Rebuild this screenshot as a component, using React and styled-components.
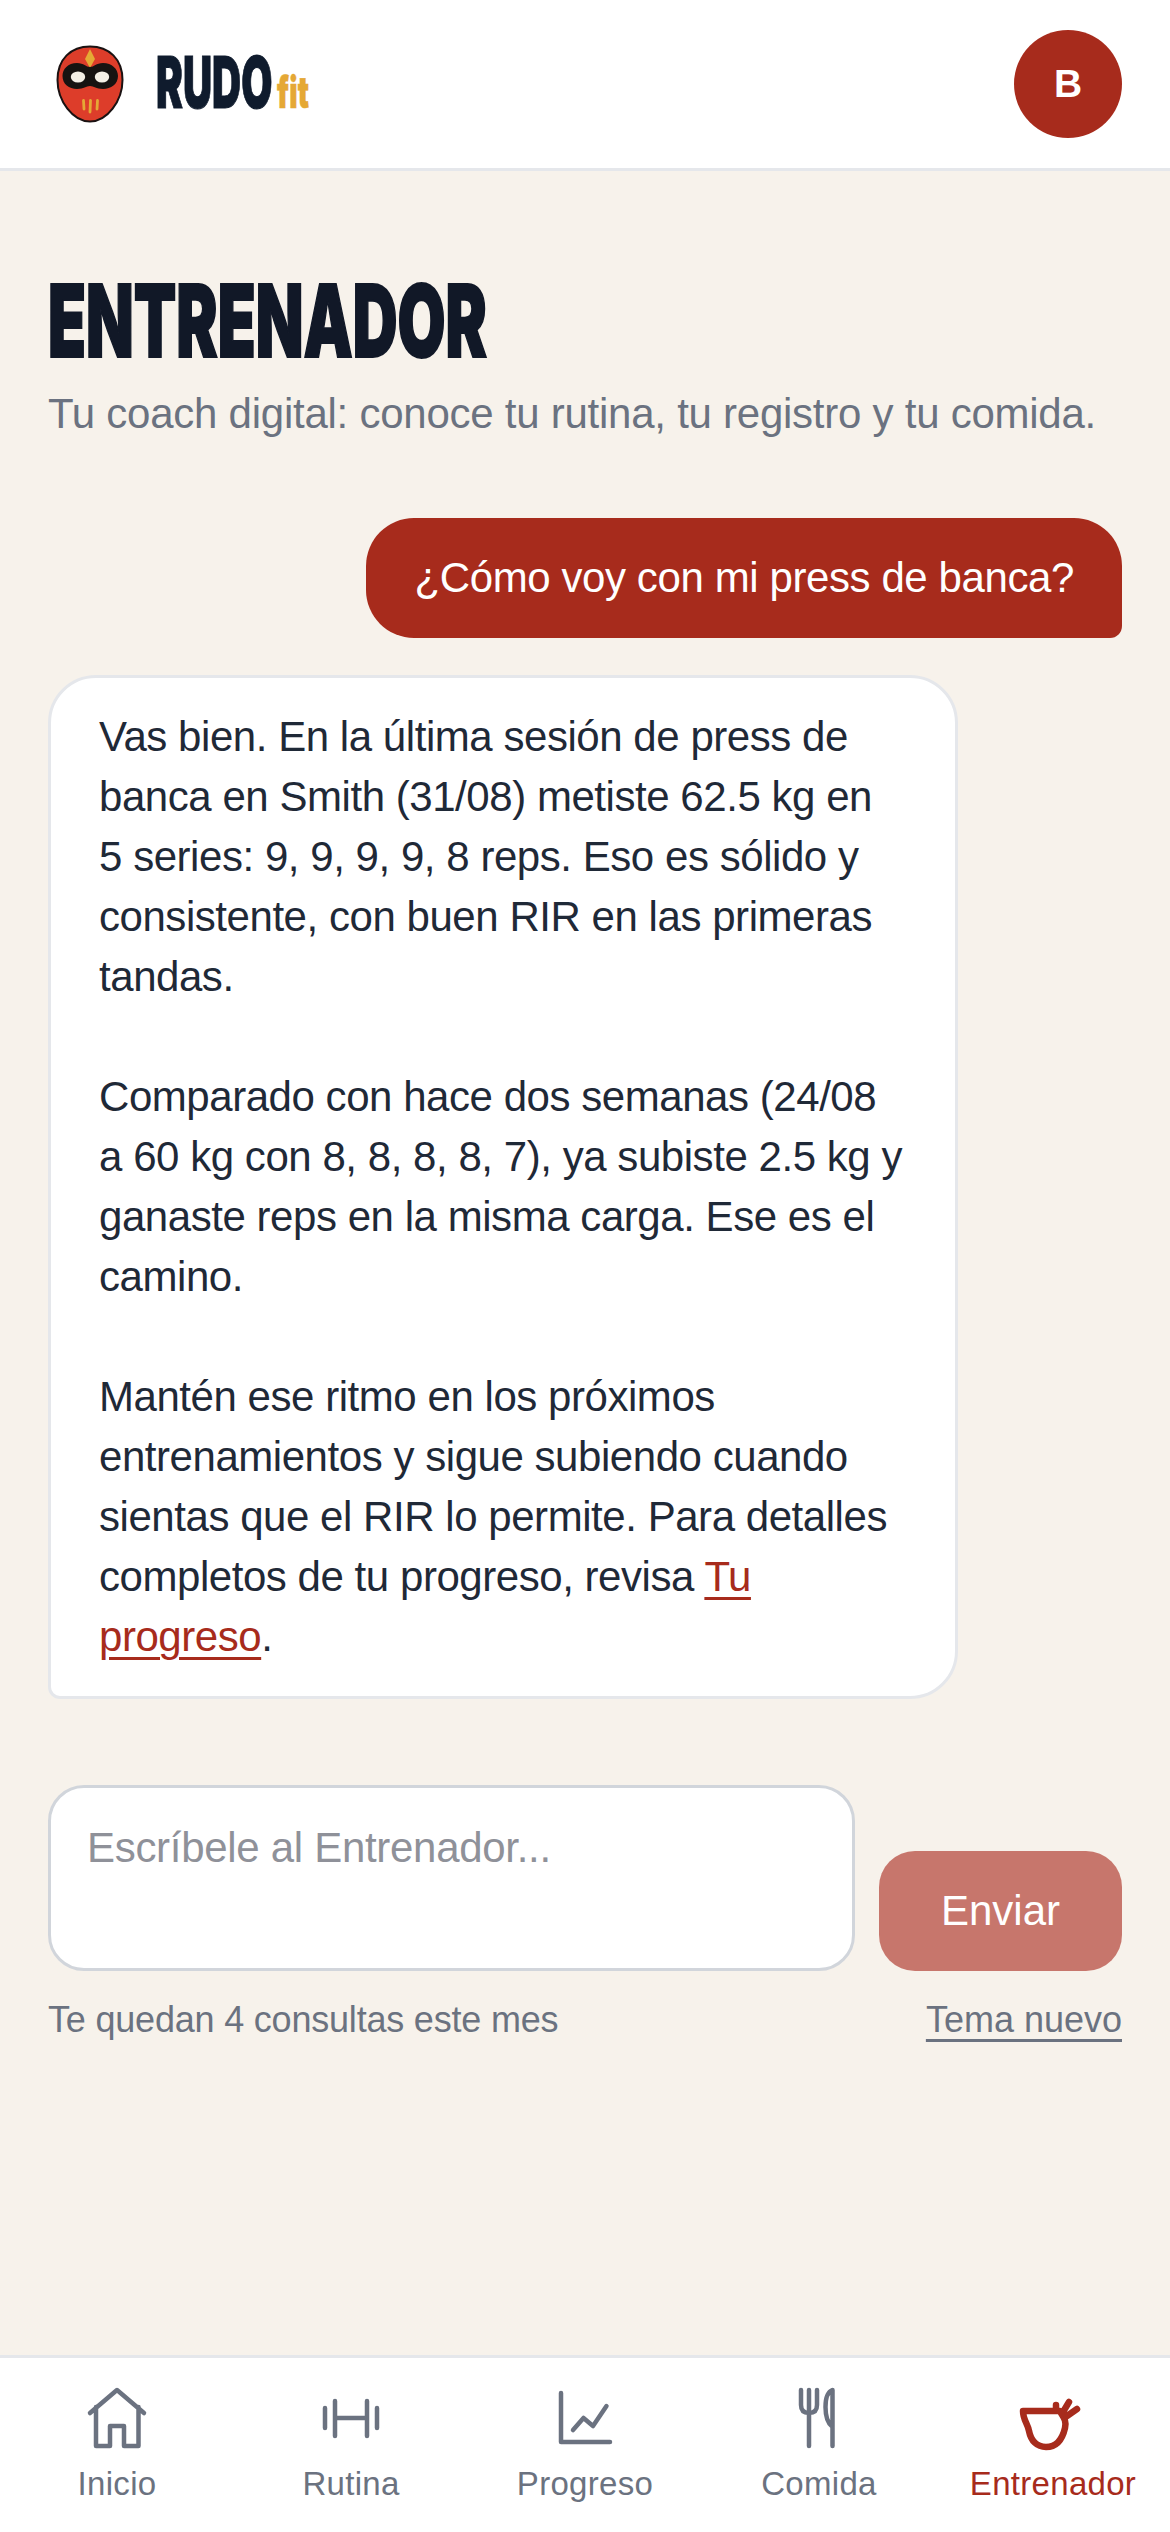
import React from "react";
import styled, { createGlobalStyle } from "styled-components";

const Global = createGlobalStyle`
  html, body { margin: 0; padding: 0; background: #f7f2eb; }
  body { font-family: "Liberation Sans", Arial, sans-serif; color: #111827; }
  * { box-sizing: border-box; }
`;
const Page = styled.div`
  height: 2532px; display: flex; flex-direction: column; overflow: hidden;
`;
const Header = styled.header`
  height: 171px; flex: none; background: #fff; border-bottom: 3px solid #e5e7eb;
  display: flex; align-items: center; justify-content: space-between; padding: 0 48px 0 56px;
`;
const Brand = styled.div`display: flex; align-items: center; gap: 32px;`;
const Wordmark = styled.div`
  display: flex; align-items: baseline; width: 160px; height: 76px;
`;
const Squeezed = styled.span`
  display: inline-block; font-family: Inter, sans-serif; font-weight: 900; line-height: 1;
  transform-origin: left bottom; transform: scaleX(${p => p.$sx});
  font-size: ${p => p.$size}px; color: ${p => p.$color};
  -webkit-text-stroke: ${p => p.$stroke}px ${p => p.$color};
  letter-spacing: ${p => p.$ls || 0}px; white-space: nowrap;
  flex: none; width: ${p => p.$w}px;
`;
const Avatar = styled.div`
  width: 108px; height: 108px; border-radius: 50%; background: #a72b1c; color: #fff;
  display: flex; align-items: center; justify-content: center; font-size: 39px; font-weight: 700;
`;
const Main = styled.main`flex: 1; padding: 102px 48px 0; display: flex; flex-direction: column;`;
const Title = styled.h1`
  margin: 0; height: 96px; display: flex; align-items: center;
`;
const Subtitle = styled.p`
  margin: 15px 0 0; font-size: 42px; line-height: 60px; color: #6b7280; letter-spacing: -0.25px; white-space: nowrap;
`;
const Thread = styled.div`margin-top: 74px; display: flex; flex-direction: column; gap: 37px;`;
const UserBubble = styled.div`
  align-self: flex-end; background: #a72b1c; color: #fff; font-size: 42px; line-height: 60px; letter-spacing: -0.4px;
  padding: 30px 48px; border-radius: 48px 48px 12px 48px; white-space: nowrap;
`;
const CoachBubble = styled.div`
  align-self: flex-start; width: 910px; background: #fff; border: 3px solid #e5e7eb; letter-spacing: -0.45px;
  padding: 29px 50px 29px 48px; border-radius: 48px 48px 48px 12px; font-size: 42px; line-height: 60px; color: #1f2937;
`;
const Para = styled.p`
  margin: 0 0 60px; &:last-child { margin-bottom: 0; }
`;
const InlineLink = styled.a`color: #a72b1c; text-decoration: underline; text-underline-offset: 6px; text-decoration-thickness: 3px;`;
const Composer = styled.form`margin-top: 86px; display: flex; align-items: flex-end; gap: 24px;`;
const Input = styled.textarea`
  flex: 1; height: 186px; border: 3px solid #d1d5db; border-radius: 36px; background: #fff; padding: 35px 36px;
  font: 42px/50px "Liberation Sans", Arial, sans-serif; letter-spacing: -0.3px; resize: none; outline: none;
  &::placeholder { color: #8f9199; opacity: 1; }
`;
const Send = styled.button`
  width: 243px; height: 120px; flex: none; border: 0; border-radius: 36px; background: #c7766c; color: #fff;
  font: 42px "Liberation Sans", Arial, sans-serif;
`;
const Meta = styled.div`
  margin-top: 25px; display: flex; justify-content: space-between; font-size: 36px; line-height: 48px; color: #6b7280; letter-spacing: -0.2px;
`;
const MetaLink = styled.a`color: #6b7280; letter-spacing: 0; text-decoration: underline; text-underline-offset: 7px; text-decoration-thickness: 3px;`;
const Nav = styled.nav`
  height: 177px; flex: none; background: #fff; border-top: 3px solid #e5e7eb; display: grid; grid-template-columns: repeat(5, 1fr);
`;
const NavItem = styled.a`
  display: flex; flex-direction: column; align-items: center; padding-top: 23px; font-size: 33px; line-height: 48px; letter-spacing: 0.3px;
  color: ${p => (p.$active ? "#a72b1c" : "#6b7280")};
  svg { display: block; width: 72px; height: 72px; margin-bottom: 7px; flex: none; fill: none; stroke: currentColor; stroke-linecap: round; stroke-linejoin: round; stroke-width: 4.5; }
`;

const Logo = () => (
  <svg width="68" height="78" viewBox="0 0 68 78">
    <path d="M34 1.5C53 1.5 66.5 14 66.5 35C66.5 56 51 76.5 34 76.5C17 76.5 1.5 56 1.5 35C1.5 14 15 1.5 34 1.5Z" fill="#dd3d2a" stroke="#1a1212" strokeWidth="2" />
    <path d="M34 4L39 14L34 23L29 14Z" fill="#e5a835" />
    <path d="M21 18C28 18 30 22 34 22C38 22 40 18 47 18C56 18 62 24 62 31C62 39 55 44 47 44C40 44 38 41 34 41C30 41 28 44 21 44C13 44 6.5 39 6.5 31C6.5 24 12 18 21 18Z" fill="#171311" />
    <ellipse cx="22" cy="32" rx="7.2" ry="5.5" fill="#f5f0e6" />
    <ellipse cx="46" cy="32" rx="7.2" ry="5.5" fill="#f5f0e6" />
    <g stroke="#e5a835" strokeWidth="2.8" strokeLinecap="round" fill="none">
      <path d="M27.5 55.5L28 64" /><path d="M34.5 55.5L34 67" /><path d="M41.5 55.5L41 64" />
    </g>
  </svg>
);

const icons = {
  home: <svg viewBox="0 0 72 72"><path d="M9 32L36 9L63 32M15 26V65H29V45H43V65H57.5V26" /></svg>,
  barbell: <svg viewBox="0 0 72 72"><path d="M10 27V47M20 20V55M52 20V55M62 27V47M20 37H52" /></svg>,
  chart: <svg viewBox="0 0 72 72"><path d="M12 12V61H61M24 49L34.5 37L44 45L57.5 25" /></svg>,
  food: <svg viewBox="0 0 72 72"><path d="M18 9V24Q18 32 26 32Q34 32 34 24V9M26 9V65M49.5 9C44 11 42.5 17 42.5 26C42.5 36 44 42 49.5 46ZM49.5 9V65" /></svg>,
  coach: <svg viewBox="0 0 72 72" style={{ strokeWidth: 6.5 }}><path d="M6 30H43C45 35 50 38 48 47C45 60 38 66 29 66C20 66 14 60 12 50C11 43 6 39 6 30ZM39 24V30M52 21L46 31M60 28L50 35" /></svg>,
};

const tabs = [
  ["Inicio", "home"], ["Rutina", "barbell"], ["Progreso", "chart"], ["Comida", "food"], ["Entrenador", "coach", true],
];

export default function App() {
  return (
    <Page>
      <Global />
      <Header>
        <Brand>
          <Logo />
          <Wordmark>
            <Squeezed $size={72} $sx={0.56} $stroke={1} $color="#0f1b2d" $w={121}>RUDO</Squeezed>
            <Squeezed $size={44} $sx={0.64} $stroke={0.5} $color="#e5a835" $w={34}>fit</Squeezed>
          </Wordmark>
        </Brand>
        <Avatar>B</Avatar>
      </Header>
      <Main>
        <Title><Squeezed $size={100} $sx={0.62} $stroke={2} $color="#111827" $w={440}>ENTRENADOR</Squeezed></Title>
        <Subtitle>Tu coach digital: conoce tu rutina, tu registro y tu comida.</Subtitle>
        <Thread>
          <UserBubble>¿Cómo voy con mi press de banca?</UserBubble>
          <CoachBubble>
            <Para>Vas bien. En la última sesión de press de banca en Smith (31/08) metiste 62.5 kg en 5 series: 9, 9, 9, 9, 8 reps. Eso es sólido y consistente, con buen RIR en las primeras tandas.</Para>
            <Para>Comparado con hace dos semanas (24/08 a 60 kg con 8, 8, 8, 8, 7), ya subiste 2.5 kg y ganaste reps en la misma carga. Ese es el camino.</Para>
            <Para>Mantén ese ritmo en los próximos entrenamientos y sigue subiendo cuando sientas que el RIR lo permite. Para detalles completos de tu progreso, revisa <InlineLink>Tu progreso</InlineLink>.</Para>
          </CoachBubble>
        </Thread>
        <Composer>
          <Input placeholder="Escríbele al Entrenador..." />
          <Send type="button">Enviar</Send>
        </Composer>
        <Meta>
          <span>Te quedan 4 consultas este mes</span>
          <MetaLink>Tema nuevo</MetaLink>
        </Meta>
      </Main>
      <Nav>
        {tabs.map(([label, icon, active]) => (
          <NavItem key={label} $active={active}>{icons[icon]}{label}</NavItem>
        ))}
      </Nav>
    </Page>
  );
}
